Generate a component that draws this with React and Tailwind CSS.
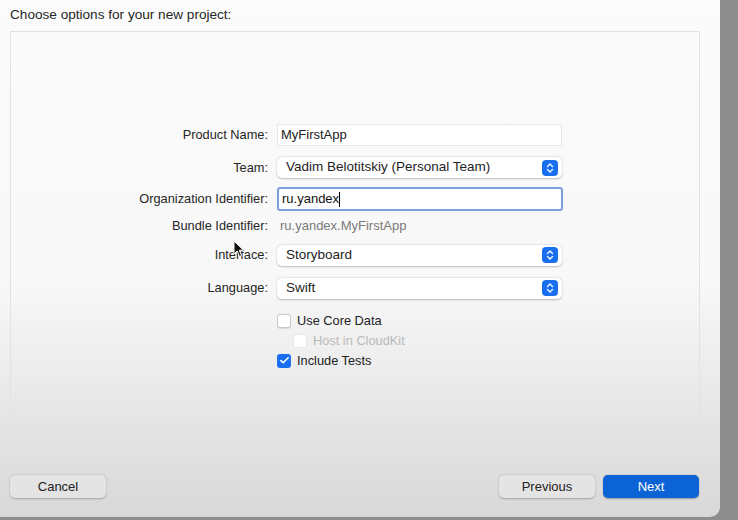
import { ChevronsUpDown, Check } from 'lucide-react'

const font = { fontFamily: '"Liberation Sans", Arial, sans-serif' }

function Label({ children }) {
  return <div className="w-[266px] shrink-0 pr-[9px] text-right text-[12.8px] text-[#262626]">{children}</div>
}

function Row({ label, className = '', children }) {
  return (
    <div className={`flex items-center ${className}`}>
      <Label>{label}</Label>
      {children}
    </div>
  )
}

function TextField({ value, focused }) {
  if (focused) {
    return (
      <div className="w-[286px] h-[24px] rounded-[3px] border-[2.5px] border-[#7d9fdc] bg-white flex items-center pl-[3px] text-[13px] text-[#111]">
        {value}
        <span className="inline-block w-px h-[15px] bg-black" />
      </div>
    )
  }
  return (
    <div className="w-[285px] h-[22px] border border-[#e6e6e6] bg-white flex items-center pl-[3px] text-[13px] text-[#222]">
      {value}
    </div>
  )
}

function Popup({ value }) {
  return (
    <div className="w-[285px] h-[21px] rounded-[5px] bg-white shadow-[0_0.5px_2px_rgba(0,0,0,0.25)] flex items-center pl-[9px] pr-[4px] text-[13.5px] text-[#1e1e1e]">
      <span className="flex-1">{value}</span>
      <span className="w-[16px] h-[16px] rounded-[4px] bg-[#1a6ef2] flex items-center justify-center">
        <ChevronsUpDown size={12} strokeWidth={2.6} color="white" />
      </span>
    </div>
  )
}

function Checkbox({ checked, disabled, label, indent }) {
  return (
    <div className={`h-[20px] flex items-center gap-[6px] ${indent ? 'pl-[282px]' : 'pl-[266px]'}`}>
      {checked ? (
        <span className="w-[14px] h-[14px] rounded-[3px] bg-[#1a6ef2] flex items-center justify-center">
          <Check size={11} strokeWidth={3.5} color="white" />
        </span>
      ) : (
        <span
          className={`w-[14px] h-[14px] rounded-[3px] border bg-white ${
            disabled ? 'border-[#e6e6e6]' : 'border-[#c8c8c8] shadow-[0_0.5px_1px_rgba(0,0,0,0.1)]'
          }`}
        />
      )}
      <span className={`text-[12.8px] ${disabled ? 'text-[#b9b9b9]' : 'text-[#222]'}`}>{label}</span>
    </div>
  )
}

function Button({ children, primary, className = '' }) {
  return (
    <div
      className={`w-[96px] h-[23px] rounded-[5px] flex items-center justify-center text-[13px] ${
        primary
          ? 'bg-[#0b63d6] text-white shadow-[0_0.5px_1.5px_rgba(0,0,0,0.3)]'
          : 'bg-[#e4e4e4] text-[#222] shadow-[0_0.5px_2px_rgba(0,0,0,0.25)]'
      } ${className}`}
    >
      {children}
    </div>
  )
}

export default function App() {
  return (
    <div className="w-[738px] h-[520px] bg-[#8e8e8e] overflow-hidden" style={font}>
      <div className="relative w-[720px] h-[517px] rounded-br-[10px] bg-gradient-to-b from-[#fbfbfb] via-[#f8f8f8] via-55% to-[#d8d8d8] flex flex-col">
        <div className="h-[31px] pl-[10px] flex items-center text-[13.6px] text-[#262626]">
          Choose options for your new project:
        </div>

        <div className="ml-[10px] w-[690px] h-[425px] border border-[#e2e2e2] flex flex-col pt-[92px]">
          <Row label="Product Name:">
            <TextField value="MyFirstApp" />
          </Row>
          <Row label="Team:" className="mt-[11px]">
            <Popup value="Vadim Belotitskiy (Personal Team)" />
          </Row>
          <Row label="Organization Identifier:" className="mt-[9px]">
            <TextField value="ru.yandex" focused />
          </Row>
          <Row label="Bundle Identifier:" className="mt-[5px]">
            <span className="pl-[3px] text-[13px] text-[#7a7a7a]">ru.yandex.MyFirstApp</span>
          </Row>
          <Row label="Interface:" className="mt-[9px]">
            <Popup value="Storyboard" />
          </Row>
          <Row label="Language:" className="mt-[12px]">
            <Popup value="Swift" />
          </Row>
          <div className="mt-[12px] flex flex-col">
            <Checkbox label="Use Core Data" />
            <Checkbox label="Host in CloudKit" disabled indent />
            <Checkbox label="Include Tests" checked />
          </div>
        </div>

        <div className="flex items-center pl-[10px] mt-[19px] w-[699px]">
          <Button>Cancel</Button>
          <div className="flex-1" />
          <Button>Previous</Button>
          <Button primary className="ml-[8px]">Next</Button>
        </div>

        <svg className="absolute left-[233px] top-[240px]" width="12" height="18" viewBox="0 0 12 18">
          <path d="M1 1 L1 14 L4.2 11 L6.5 16.5 L8.6 15.6 L6.3 10.3 L10.6 10.3 Z" fill="#111" stroke="white" strokeWidth="1" />
        </svg>
      </div>
    </div>
  )
}
